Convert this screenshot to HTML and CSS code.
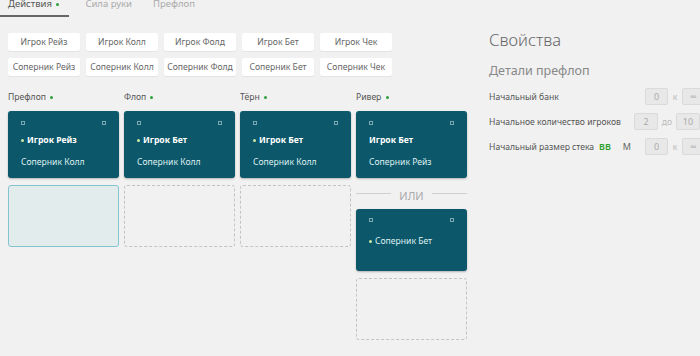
FILE: index.html
```html
<!DOCTYPE html>
<html lang="ru">
<head>
<meta charset="utf-8">
<link rel="stylesheet" href="styles.css">
</head>
<body>
<div class="page">
  <div class="main">
    <div class="tabs">
      <div class="tab active">Действия <span class="gdot"></span></div>
      <div class="tab">Сила руки</div>
      <div class="tab">Префлоп</div>
    </div>
    <div class="actions">
      <div class="btn">Игрок Рейз</div>
      <div class="btn">Игрок Колл</div>
      <div class="btn">Игрок Фолд</div>
      <div class="btn">Игрок Бет</div>
      <div class="btn">Игрок Чек</div>
      <div class="btn">Соперник Рейз</div>
      <div class="btn">Соперник Колл</div>
      <div class="btn">Соперник Фолд</div>
      <div class="btn">Соперник Бет</div>
      <div class="btn">Соперник Чек</div>
    </div>
    <div class="streets">
      <div class="col">
        <div class="col-title">Префлоп <span class="gdot"></span></div>
        <div class="card">
          <div class="marks"><i></i><i></i></div>
          <div class="line bold"><span class="ydot"></span>Игрок Рейз</div>
          <div class="line">Соперник Колл</div>
        </div>
        <div class="drop selected"></div>
      </div>
      <div class="col">
        <div class="col-title">Флоп <span class="gdot"></span></div>
        <div class="card">
          <div class="marks"><i></i><i></i></div>
          <div class="line bold"><span class="ydot"></span>Игрок Бет</div>
          <div class="line">Соперник Колл</div>
        </div>
        <div class="drop"></div>
      </div>
      <div class="col">
        <div class="col-title">Тёрн <span class="gdot"></span></div>
        <div class="card">
          <div class="marks"><i></i><i></i></div>
          <div class="line bold"><span class="ydot"></span>Игрок Бет</div>
          <div class="line">Соперник Колл</div>
        </div>
        <div class="drop"></div>
      </div>
      <div class="col">
        <div class="col-title">Ривер <span class="gdot"></span></div>
        <div class="card">
          <div class="marks"><i></i><i></i></div>
          <div class="line bold">Игрок Бет</div>
          <div class="line">Соперник Рейз</div>
        </div>
        <div class="or"><span>ИЛИ</span></div>
        <div class="card short">
          <div class="marks"><i></i><i></i></div>
          <div class="line"><span class="ydot"></span>Соперник Бет</div>
        </div>
        <div class="drop"></div>
      </div>
    </div>
  </div>
  <div class="side">
    <div class="side-title">Свойства</div>
    <div class="side-sub">Детали префлоп</div>
    <div class="prop">
      <div class="label">Начальный банк</div>
      <div class="ctrl">
        <div class="inp">0</div><span class="sep">к</span><div class="inp">∞</div>
      </div>
    </div>
    <div class="prop">
      <div class="label">Начальное количество игроков</div>
      <div class="ctrl r2">
        <div class="inp w24">2</div><span class="sep">до</span><div class="inp w24">10</div>
      </div>
    </div>
    <div class="prop">
      <div class="label">Начальный размер стека</div>
      <div class="ctrl">
        <span class="unit bb">BB</span><span class="unit m">M</span>
        <div class="inp">0</div><span class="sep">к</span><div class="inp">∞</div>
      </div>
    </div>
  </div>
</div>
</body>
</html>
```
FILE: styles.css
```css
html, body {
  margin: 0;
  overflow: hidden;
  background: #f1f1f1;
}
body {
  font-family: "Noto Sans", "Open Sans", sans-serif;
  color: #555;
  width: 700px;
  height: 356px;
}
.page {
  display: flex;
  width: 710px;
}
.main {
  width: 470px;
  flex: none;
}
.tabs {
  display: flex;
  margin-top: -8px;
  height: 25px;
  font-size: 9.5px;
}
.tab {
  padding: 0 8px;
  line-height: 23px;
  color: #aaa;
  margin-right: 5px;
}
.tab.active {
  color: #555;
  border-bottom: 2px solid #666;
  padding-right: 10px;
  margin-right: 8px;
}
.gdot {
  display: inline-block;
  width: 3px;
  height: 3px;
  border-radius: 50%;
  background: #2e9e3e;
  vertical-align: middle;
  margin-left: 2px;
}
.actions {
  display: grid;
  grid-template-columns: repeat(5, 72px);
  column-gap: 6px;
  row-gap: 7px;
  padding: 16px 8px 0;
}
.btn {
  height: 18px;
  line-height: 18px;
  background: #fff;
  border-radius: 2px;
  box-shadow: 0 1px 1px rgba(0,0,0,0.06);
  text-align: center;
  font-size: 8.6px;
  color: #666;
  white-space: nowrap;
}
.streets {
  display: grid;
  grid-template-columns: repeat(4, 111px);
  column-gap: 5px;
  padding: 14px 8px 0;
  align-items: start;
}
.col {
  display: flex;
  flex-direction: column;
}
.col-title {
  font-size: 8.6px;
  color: #555;
  line-height: 14px;
  margin-bottom: 7px;
}
.card {
  height: 67px;
  box-sizing: border-box;
  background: #0c5769;
  border-radius: 3px;
  box-shadow: 0 1px 2px rgba(0,0,0,0.25);
  padding: 9px 12px 0 13px;
  color: #dff0f2;
  font-size: 8.6px;
}
.card.short {
  height: 62px;
  padding-top: 8px;
}
.marks {
  display: flex;
  justify-content: space-between;
  height: 6px;
  align-items: center;
  padding-right: 1px;
}
.marks i {
  display: block;
  border: 1px solid #7aa8b2;
  box-sizing: content-box;
  width: 2px;
  height: 2px;
}
.line {
  line-height: 14px;
  margin-top: 6px;
  white-space: nowrap;
}
.line.bold {
  font-weight: 700;
  color: #fff;
  margin-top: 7px;
  margin-bottom: 8px;
}
.card.short .line {
  margin-top: 11px;
}
.ydot {
  display: inline-block;
  width: 3px;
  height: 3px;
  border-radius: 50%;
  background: #cfe8a6;
  vertical-align: middle;
  margin-right: 3px;
}
.drop {
  height: 62px;
  box-sizing: border-box;
  margin-top: 7px;
  border: 1px dashed #c4c4c4;
  border-radius: 3px;
}
.drop.selected {
  border: 1px solid #84c3cf;
  background: #e2eced;
}
.or {
  display: flex;
  align-items: center;
  height: 24px;
  margin: 3px 0 4px;
  color: #aaa;
  font-size: 11px;
}
.or::before, .or::after {
  content: "";
  flex: 1;
  height: 1px;
  background: #d0d0d0;
}
.or span {
  padding: 0 8px;
  position: relative;
  top: 2px;
}
.side {
  flex: none;
  width: 216px;
  padding-left: 19px;
  padding-top: 30px;
}
.side-title {
  font-size: 16.5px;
  font-weight: 300;
  color: #666;
  line-height: 20px;
}
.side-sub {
  font-size: 12.5px;
  color: #888;
  line-height: 18px;
  margin-top: 12px;
  margin-bottom: 8px;
}
.prop {
  display: flex;
  align-items: center;
  height: 17px;
  margin-bottom: 8px;
}
.prop:last-child {
  margin-top: 2px;
}
.label {
  flex: 1;
  font-size: 8.6px;
  color: #555;
  white-space: nowrap;
}
.ctrl {
  display: flex;
  align-items: center;
}
.ctrl.r2 {
  margin-right: 5px;
}
.inp {
  width: 23px;
  height: 17px;
  box-sizing: border-box;
  border: 1px solid #dadada;
  border-radius: 2px;
  background: #e8e8e8;
  color: #aaa;
  font-size: 9px;
  line-height: 15px;
  text-align: center;
}
.inp.w24 {
  width: 24px;
}
.sep {
  font-size: 8.6px;
  color: #bbb;
  width: 14px;
  text-align: center;
}
.r2 .sep {
  width: 18px;
}
.unit {
  font-size: 9px;
  margin-right: 14px;
}
.unit.bb {
  color: #2e9e2e;
  font-weight: 600;
  margin-right: 12px;
}
.unit.m {
  color: #666;
}
```
